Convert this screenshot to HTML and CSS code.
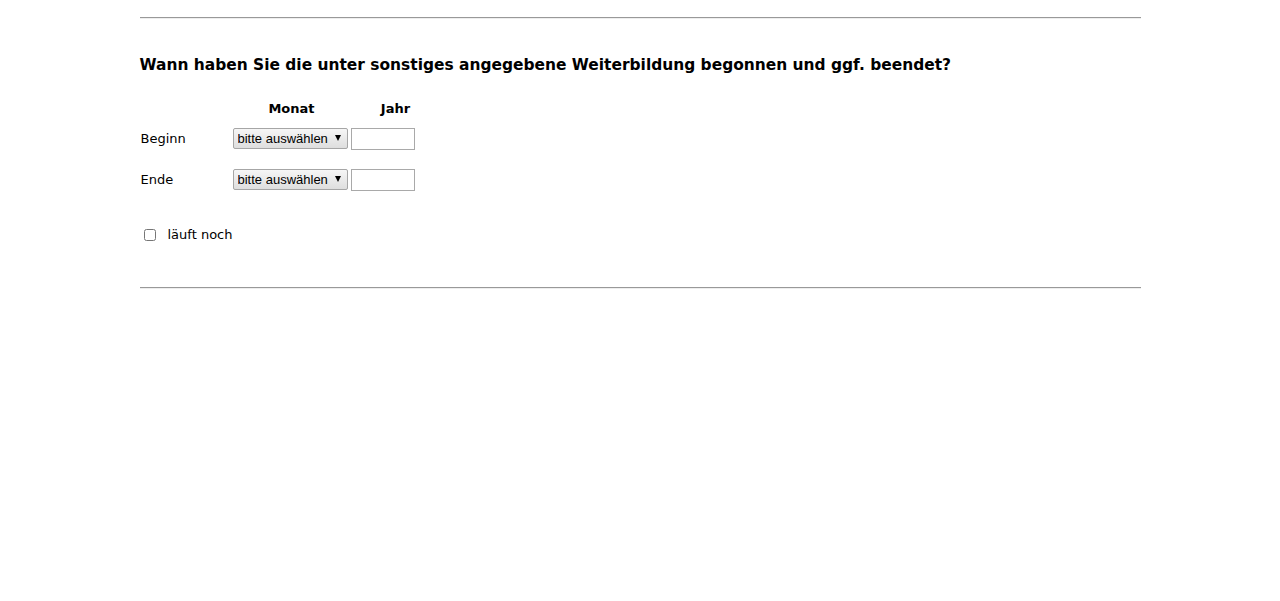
FILE: index.html
```html
<!DOCTYPE html>
<html lang="de">
<head>
  <meta charset="UTF-8">
  <title>Weiterbildung Zeitraum</title>
  <link rel="stylesheet" href="styles.css">
</head>
<body>

<div class="page">
  <hr class="rule">

  <h2 class="question">Wann haben Sie die unter sonstiges angegebene Weiterbildung begonnen und ggf. beendet?</h2>

  <table class="date-table">
    <tr>
      <th></th>
      <th class="col-month">Monat</th>
      <th class="col-year">Jahr</th>
    </tr>
    <tr>
      <td class="label">Beginn</td>
      <td class="col-month">
        <span class="select-wrap">
          <select class="month">
            <option>bitte auswählen</option>
          </select>
        </span>
      </td>
      <td class="col-year"><input type="text" class="year"></td>
    </tr>
    <tr>
      <td class="label">Ende</td>
      <td class="col-month">
        <span class="select-wrap">
          <select class="month">
            <option>bitte auswählen</option>
          </select>
        </span>
      </td>
      <td class="col-year"><input type="text" class="year"></td>
    </tr>
  </table>

  <div class="running">
    <input type="checkbox" id="laeuft">
    <label for="laeuft">läuft noch</label>
  </div>

  <hr class="rule">
</div>

</body>
</html>
```

FILE: styles.css
```css
body {
  margin: 0;
  font-family: "DejaVu Sans", Verdana, sans-serif;
  font-size: 13px;
  color: #000;
  background: #fff;
}
.page {
  width: 1001px;
  margin: 0 auto;
  padding-top: 17px;
}
.rule {
  margin: 0;
  border: 0;
  border-top: 1px solid #999;
  border-bottom: 1px solid #eee;
  height: 0;
}
.question {
  font-size: 15.45px;
  font-weight: bold;
  margin: 36px 0 23px 0;
  line-height: 20px;
}
.date-table {
  border-collapse: collapse;
}
.date-table th {
  font-size: 13px;
  font-weight: bold;
  height: 20px;
  padding: 0;
  text-align: center;
}
.date-table td {
  padding: 0;
  height: 41px;
}
.label {
  width: 92px;
  padding-left: 1px !important;
}
.col-month {
  width: 118px;
}
.col-year {
  width: 90px;
}
.date-table td.col-year {
  text-align: left;
}
/* Auswahlfeld mit eigenem Pfeil */
.select-wrap {
  position: relative;
  display: inline-block;
  vertical-align: middle;
}
.select-wrap::after {
  content: "";
  position: absolute;
  right: 7px;
  top: 7px;
  border-left: 3.5px solid transparent;
  border-right: 3.5px solid transparent;
  border-top: 6px solid #000;
  pointer-events: none;
}
select.month {
  -webkit-appearance: none;
  appearance: none;
  display: block;
  font-family: "Liberation Sans", Arial, sans-serif;
  font-size: 13px;
  width: 115px;
  height: 21px;
  padding: 0 0 0 4px;
  border: 1px solid #a6a6a6;
  border-radius: 2px;
  background: linear-gradient(#f6f6f6, #dedede);
  color: #000;
  margin: 0;
}
input.year {
  box-sizing: border-box;
  width: 64px;
  height: 22px;
  padding: 1px 2px;
  border: 1px solid #a9a9a9;
  margin: 0;
  vertical-align: middle;
}
.running {
  display: flex;
  align-items: center;
  margin: 27px 0 45px 4px;
}
.running input {
  margin: 0;
  width: 12px;
  height: 12px;
}
.running label {
  margin-left: 12px;
}
```
